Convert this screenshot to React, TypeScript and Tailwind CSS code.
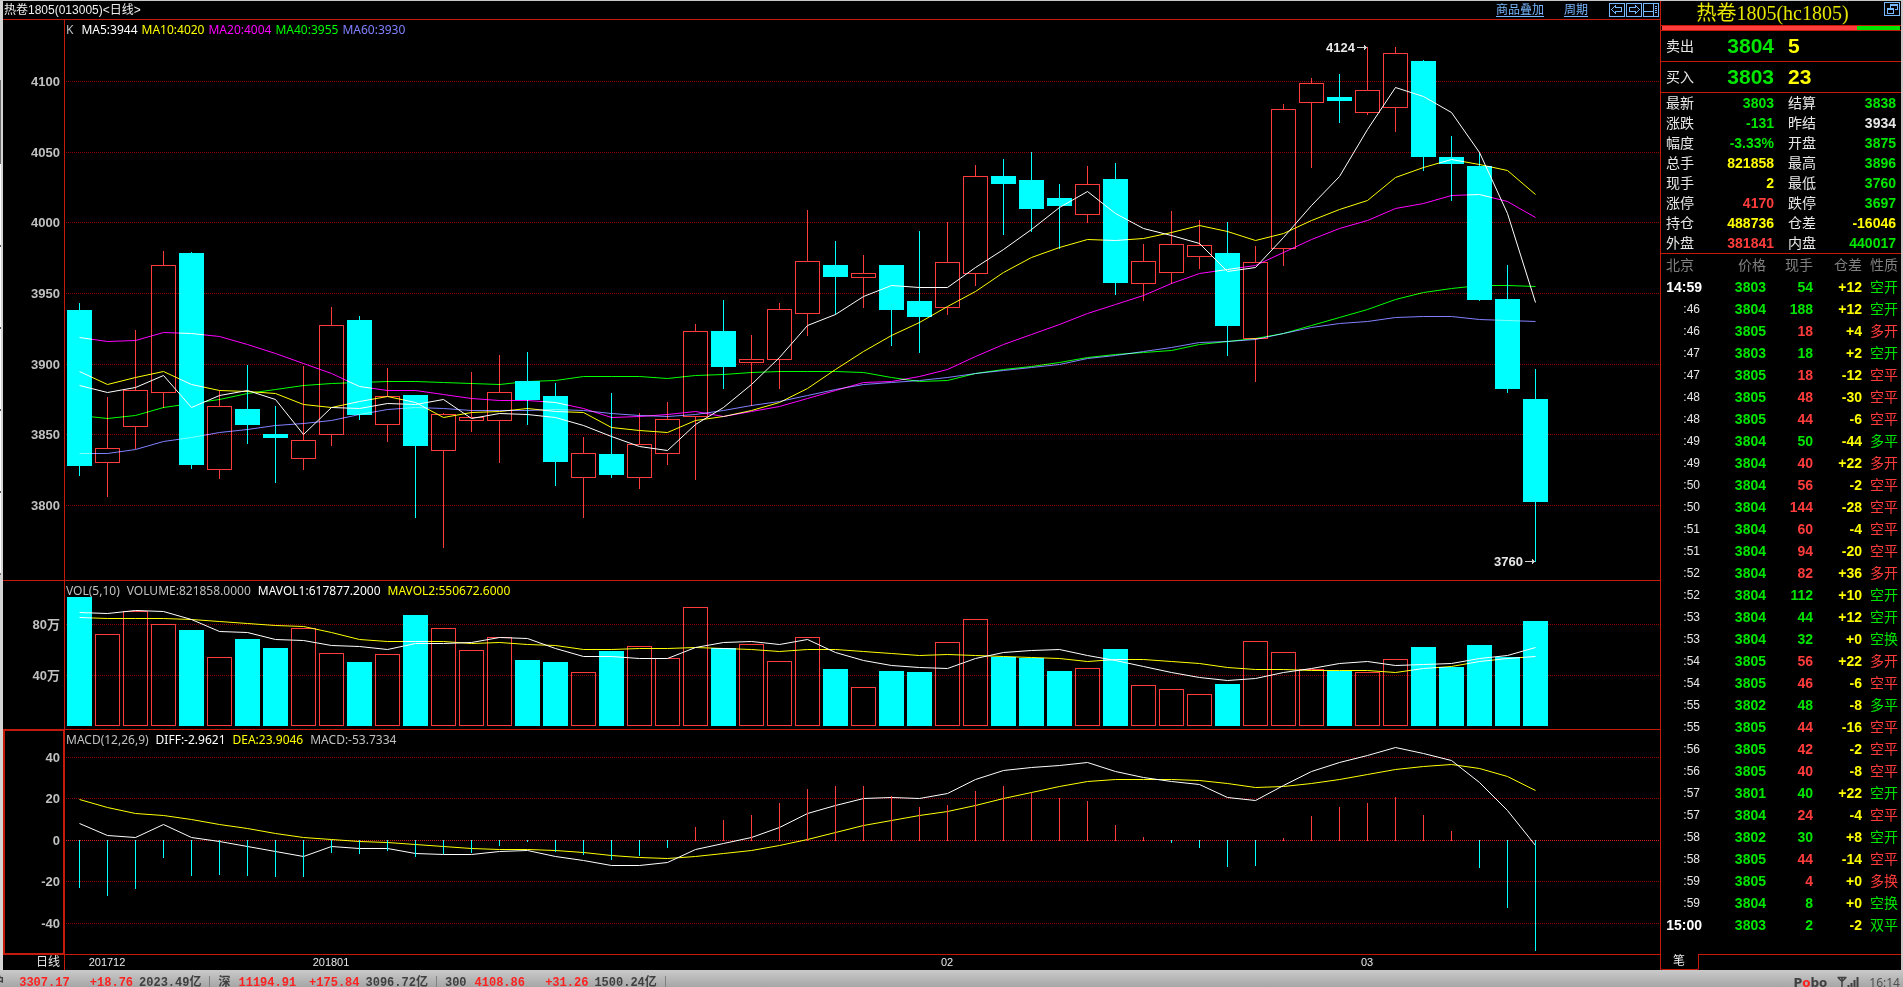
import type { ReactNode } from 'react';
import clsx from 'clsx';

type Candle = [top: number, bottom: number, high: number, low: number, up: 0 | 1];
type Tone = 'up' | 'down' | 'warn' | 'plain';

const STEP = 28;
const BODY = 25;
const centerX = (i: number) => 14 + i * STEP;

// All y values share one scale that starts at the top of the window,
// every pane shifts them by its own `top`.
const candles: Candle[] = [
  [310, 466, 303, 476, 0], [448, 463, 397, 497, 1], [390, 427, 330, 449, 1], [265, 393, 251, 408, 1],
  [253, 465, 252, 469, 0], [406, 470, 390, 479, 1], [409, 425, 365, 444, 0], [434, 438, 406, 483, 0],
  [440, 459, 366, 470, 1], [325, 435, 307, 446, 1], [320, 415, 316, 420, 0], [396, 425, 368, 442, 1],
  [395, 446, 395, 518, 0], [414, 451, 413, 548, 1], [417, 421, 372, 432, 1], [392, 421, 355, 463, 1],
  [381, 400, 352, 425, 0], [396, 462, 383, 486, 0], [453, 478, 437, 518, 1], [454, 475, 393, 478, 0],
  [444, 478, 413, 489, 1], [419, 454, 402, 465, 1], [331, 417, 324, 480, 1], [331, 367, 300, 389, 0],
  [359, 363, 335, 406, 1], [309, 360, 303, 389, 1], [261, 314, 210, 336, 1], [265, 277, 241, 315, 0],
  [273, 278, 255, 308, 1], [265, 310, 265, 346, 0], [301, 317, 231, 353, 0], [262, 308, 222, 315, 1],
  [176, 274, 165, 286, 1], [176, 184, 159, 235, 0], [180, 209, 152, 232, 0], [198, 206, 184, 249, 0],
  [184, 215, 166, 223, 1], [179, 283, 163, 295, 0], [261, 284, 244, 301, 1], [244, 273, 211, 284, 1],
  [245, 257, 220, 269, 1], [253, 326, 222, 356, 0], [262, 339, 246, 382, 1], [109, 249, 104, 266, 1],
  [83, 103, 78, 168, 1], [97, 101, 74, 123, 0], [90, 113, 47, 115, 1], [53, 108, 47, 132, 1],
  [61, 157, 60, 171, 0], [157, 164, 136, 201, 0], [166, 300, 152, 301, 0], [299, 389, 265, 393, 0],
  [399, 502, 369, 562, 0],
];

const ma5 = [385, 392, 387, 375, 407, 395, 390, 399, 434, 407, 408, 403, 404, 399, 418, 413, 414, 417, 425, 436, 446, 450, 424, 407, 384, 357, 325, 314, 296, 285, 287, 287, 267, 249, 229, 207, 191, 213, 228, 235, 243, 271, 267, 237, 205, 176, 129, 87, 96, 112, 152, 213, 302];
const ma10 = [371, 384, 377, 371, 384, 390, 391, 393, 404, 407, 401, 396, 402, 417, 412, 411, 408, 411, 412, 427, 430, 432, 420, 416, 410, 402, 388, 369, 351, 335, 322, 306, 291, 272, 257, 247, 239, 240, 238, 232, 225, 231, 240, 233, 220, 209, 200, 177, 167, 159, 164, 170, 194];
const ma20 = [337, 341, 340, 332, 333, 336, 344, 353, 363, 373, 386, 390, 390, 394, 398, 400, 400, 402, 408, 417, 416, 414, 411, 416, 411, 406, 398, 390, 382, 381, 376, 369, 356, 344, 334, 324, 313, 304, 295, 283, 273, 269, 265, 252, 239, 228, 220, 208, 203, 195, 194, 201, 217];
const ma40 = [415, 418, 415, 407, 403, 399, 393, 389, 385, 383, 382, 381, 381, 382, 383, 384, 381, 380, 376, 376, 376, 378, 375, 374, 372, 371, 371, 371, 372, 377, 381, 380, 373, 369, 366, 362, 357, 354, 352, 350, 344, 341, 338, 333, 325, 317, 309, 299, 292, 288, 285, 285, 286];
const ma60 = [453, 453, 449, 441, 437, 432, 429, 425, 423, 420, 414, 409, 407, 408, 410, 410, 410, 409, 410, 413, 415, 416, 414, 410, 405, 401, 395, 389, 384, 382, 380, 377, 373, 370, 367, 364, 358, 355, 351, 347, 342, 341, 339, 333, 327, 323, 321, 317, 316, 316, 319, 320, 321];

const volumes = [597, 634, 611, 624, 630, 657, 639, 648, 628, 653, 662, 654, 615, 628, 650, 637, 660, 662, 672, 651, 646, 658, 607, 648, 644, 661, 637, 669, 687, 671, 672, 642, 619, 657, 658, 671, 668, 649, 685, 689, 694, 684, 641, 652, 669, 671, 672, 659, 647, 667, 645, 657, 621];
const mavol1 = [612, 613, 610, 611, 619, 631, 632, 639, 640, 645, 646, 649, 643, 643, 642, 637, 638, 648, 656, 656, 658, 658, 647, 642, 641, 644, 639, 652, 660, 665, 667, 668, 658, 652, 650, 649, 655, 660, 666, 672, 677, 680, 678, 672, 668, 663, 661, 665, 664, 663, 658, 655, 647];
const mavol2 = [617, 618, 618, 618, 619, 621, 623, 625, 626, 632, 639, 641, 641, 641, 643, 642, 644, 645, 649, 649, 648, 648, 647, 648, 649, 651, 649, 649, 651, 653, 655, 654, 655, 656, 657, 658, 661, 659, 659, 661, 663, 667, 669, 669, 670, 670, 670, 672, 668, 666, 661, 658, 656];

const macd = [888, 896, 889, 858, 876, 875, 876, 877, 877, 853, 854, 851, 857, 854, 853, 846, 842, 852, 855, 860, 856, 848, 827, 820, 815, 803, 789, 786, 786, 796, 807, 805, 791, 786, 793, 798, 801, 825, 837, 843, 848, 867, 866, 838, 816, 807, 803, 797, 815, 831, 868, 908, 951];
const diff = [823, 835, 837, 824, 837, 841, 846, 851, 856, 846, 848, 848, 853, 854, 854, 851, 850, 856, 860, 865, 865, 862, 849, 843, 837, 827, 813, 805, 798, 797, 798, 793, 779, 770, 767, 765, 762, 771, 777, 781, 784, 797, 800, 785, 771, 762, 755, 747, 753, 760, 782, 810, 845];
const dea = [799, 807, 813, 815, 819, 824, 828, 833, 837, 839, 841, 842, 844, 846, 848, 849, 849, 850, 852, 855, 857, 858, 856, 853, 850, 845, 839, 832, 825, 820, 815, 811, 805, 798, 792, 786, 781, 779, 779, 779, 780, 783, 787, 786, 783, 779, 774, 769, 766, 764, 768, 776, 790];

const toneClass: Record<Tone, string> = {
  up: 'text-[#ff3c3c]',
  down: 'text-[#00e600]',
  warn: 'text-[#ffff00]',
  plain: 'text-[#e8e8e8]',
};

const quotes: [string, string, Tone, string, string, Tone][] = [
  ['最新', '3803', 'down', '结算', '3838', 'down'],
  ['涨跌', '-131', 'down', '昨结', '3934', 'plain'],
  ['幅度', '-3.33%', 'down', '开盘', '3875', 'down'],
  ['总手', '821858', 'warn', '最高', '3896', 'down'],
  ['现手', '2', 'warn', '最低', '3760', 'down'],
  ['涨停', '4170', 'up', '跌停', '3697', 'down'],
  ['持仓', '488736', 'warn', '仓差', '-16046', 'warn'],
  ['外盘', '381841', 'up', '内盘', '440017', 'down'],
];

const ticks: [string, string, string, string, string, Tone][] = [
  ['14:59', '3803', '54', '+12', '空开', 'down'],
  [':46', '3804', '188', '+12', '空开', 'down'],
  [':46', '3805', '18', '+4', '多开', 'up'],
  [':47', '3803', '18', '+2', '空开', 'down'],
  [':47', '3805', '18', '-12', '空平', 'up'],
  [':48', '3805', '48', '-30', '空平', 'up'],
  [':48', '3805', '44', '-6', '空平', 'up'],
  [':49', '3804', '50', '-44', '多平', 'down'],
  [':49', '3804', '40', '+22', '多开', 'up'],
  [':50', '3804', '56', '-2', '空平', 'up'],
  [':50', '3804', '144', '-28', '空平', 'up'],
  [':51', '3804', '60', '-4', '空平', 'up'],
  [':51', '3804', '94', '-20', '空平', 'up'],
  [':52', '3804', '82', '+36', '多开', 'up'],
  [':52', '3804', '112', '+10', '空开', 'down'],
  [':53', '3804', '44', '+12', '空开', 'down'],
  [':53', '3804', '32', '+0', '空换', 'down'],
  [':54', '3805', '56', '+22', '多开', 'up'],
  [':54', '3805', '46', '-6', '空平', 'up'],
  [':55', '3802', '48', '-8', '多平', 'down'],
  [':55', '3805', '44', '-16', '空平', 'up'],
  [':56', '3805', '42', '-2', '空平', 'up'],
  [':56', '3805', '40', '-8', '空平', 'up'],
  [':57', '3801', '40', '+22', '空开', 'down'],
  [':57', '3804', '24', '-4', '空平', 'up'],
  [':58', '3802', '30', '+8', '空开', 'down'],
  [':58', '3805', '44', '-14', '空平', 'up'],
  [':59', '3805', '4', '+0', '多换', 'up'],
  [':59', '3804', '8', '+0', '空换', 'down'],
  ['15:00', '3803', '2', '-2', '双平', 'down'],
];

// Scroll thumb and rows of the window that sticks out on the left.
const edgeSegments = [
  'h-[79px] bg-[#d4d4d4]',
  'h-[84px] bg-[#6a6a6a]',
  'h-[81px] bg-white',
  'h-[2px] bg-[#555]',
  'h-[80px] bg-white',
  'h-[2px] bg-[#555]',
  'h-[80px] bg-white',
  'h-[2px] bg-[#555]',
  'h-[80px] bg-white',
  'h-[2px] bg-[#555]',
  'h-[80px] bg-white',
  'h-[2px] bg-[#777]',
  'grow bg-[#d4d4d4]',
];

const Line = ({ values, color }: { values: number[]; color: string }) => (
  <polyline
    className="mix-blend-screen"
    fill="none"
    stroke={color}
    points={values.map((y, i) => `${centerX(i) + 0.5},${y + 0.5}`).join(' ')}
  />
);

const Bar = ({ i, top, bottom, up }: { i: number; top: number; bottom: number; up: boolean }) => {
  const x = centerX(i) - 12;

  return up ? (
    <rect
      x={x + 0.5}
      y={top + 0.5}
      width={BODY - 1}
      height={bottom - top - 1}
      fill="none"
      stroke="#ff3c3c"
    />
  ) : (
    <rect x={x} y={top} width={BODY} height={bottom - top} fill="#00ffff" />
  );
};

const Stick = ({ i, from, to, up }: { i: number; from: number; to: number; up: boolean }) => (
  <rect
    x={centerX(i)}
    y={Math.min(from, to)}
    width={1}
    height={Math.abs(to - from)}
    fill={up ? '#ff3c3c' : '#00ffff'}
  />
);

type PaneProps = {
  top: number;
  gutterHeight: string;
  plotHeight: string;
  legendGap: string;
  label: string;
  axis: [number, string][];
  legend: [string, string][];
  active?: boolean;
  zeroY?: number;
  children: ReactNode;
};

const Pane = ({
  top,
  gutterHeight,
  plotHeight,
  legendGap,
  label,
  axis,
  legend,
  active,
  zeroY,
  children,
}: PaneProps) => (
  <section className="flex border-b border-[#c41a0a]" aria-label={label}>
    <div
      className={clsx(
        'w-[62px] shrink-0 border-[#c41a0a]',
        active ? 'border-x-2 border-y' : 'border-r',
      )}
    >
      <svg className={clsx('block w-full overflow-visible', gutterHeight)}>
        <g
          transform={`translate(${active ? -2 : 0} ${-top - (active ? 1 : 0)})`}
          className="text-[13px] font-bold"
          fill="#c0c0c0"
          textAnchor="end"
        >
          {axis.map(([y, text]) => (
            <text key={text} x={57} y={y + 5}>
              {text}
            </text>
          ))}
        </g>
      </svg>
    </div>

    <div className="min-w-0 flex-1">
      <p
        className={clsx(
          "flex h-4 overflow-visible pl-px font-['Noto_Sans',sans-serif] text-xs leading-[20px] whitespace-nowrap",
          legendGap,
        )}
      >
        {legend.map(([text, color]) => (
          <span key={text} className={color}>
            {text}
          </span>
        ))}
      </p>
      <svg className={clsx('block w-full', plotHeight)}>
        <g transform={`translate(0 ${-top - 16})`}>
          {axis.map(([y]) => (
            <line
              key={y}
              x1={1}
              x2="100%"
              y1={y + 0.5}
              y2={y + 0.5}
              stroke={y === zeroY ? '#d82020' : '#900000'}
              strokeDasharray="1 1"
              shapeRendering="crispEdges"
            />
          ))}
          {children}
        </g>
      </svg>
    </div>
  </section>
);

const Callout = ({ x, y, text }: { x: number; y: number; text: string }) => (
  <g>
    <text x={x - 12} y={y + 5} textAnchor="end" fill="#e8e8e8" className="text-[13px] font-bold">
      {text}
    </text>
    <path d={`M${x - 10} ${y + 0.5}h10M${x - 2.5} ${y - 2}v5M${x - 1.5} ${y - 1}v3`} stroke="#d0d0d0" />
  </g>
);

const ToolButton = ({ label, children }: { label: string; children: ReactNode }) => (
  <button type="button" aria-label={label} className="block">
    <svg width="16" height="14" fill="none" stroke="#78b8ff" shapeRendering="crispEdges">
      <rect x="0.5" y="0.5" width="15" height="13" />
      {children}
    </svg>
  </button>
);

const ChartHeader = () => (
  <header className="flex h-[19px] items-center border-b border-[#c41a0a] pl-px text-xs">
    <h1 className="flex-1 text-[#f0f0f0]">热卷1805(013005)&lt;日线&gt;</h1>
    <nav className="flex items-center text-[#78b8ff]">
      <a href="#overlay" className="mr-5 underline underline-offset-2">
        商品叠加
      </a>
      <a href="#period" className="mr-[21px] underline underline-offset-2">
        周期
      </a>
      <div className="flex gap-px pr-px">
        <ToolButton label="上一个">
          <path d="M2.5 6.5l4-4v2h6v4h-6v2z" />
        </ToolButton>
        <ToolButton label="下一个">
          <path d="M13.5 6.5l-4-4v2h-6v4h6v2z" />
        </ToolButton>
        <ToolButton label="布局">
          <path d="M10.5 1v12M1 8.5h9M12 3.5h2M12 5.5h2M12 7.5h2M12 9.5h2" />
        </ToolButton>
      </div>
    </nav>
  </header>
);

const TimeAxis = () => (
  <div className="flex h-[15px]">
    <div className="w-[62px] border-r border-[#c41a0a] pr-1 text-right text-xs leading-[15px] text-[#e8e8e8]">
      日线
    </div>
    <svg className="block h-[15px] flex-1">
      <g className="text-[11px]" fill="#e8e8e8" textAnchor="middle">
        {[
          [1, '201712'],
          [9, '201801'],
          [31, '02'],
          [46, '03'],
        ].map(([i, text]) => (
          <text key={text} x={centerX(Number(i))} y={11}>
            {text}
          </text>
        ))}
      </g>
    </svg>
  </div>
);

const Charts = () => (
  <main className="min-w-0 flex-1">
    <ChartHeader />

    <Pane
      top={20}
      gutterHeight="h-[560px]"
      plotHeight="h-[544px]"
      legendGap="gap-1"
      label="K线"
      axis={[
        [81, '4100'],
        [152, '4050'],
        [222, '4000'],
        [293, '3950'],
        [364, '3900'],
        [434, '3850'],
        [505, '3800'],
      ]}
      legend={[
        ['K', 'pr-[4px] text-[#c0c0c0]'],
        ['MA5:3944', 'text-white'],
        ['MA10:4020', 'text-[#ffff00]'],
        ['MA20:4004', 'text-[#ff00ff]'],
        ['MA40:3955', 'text-[#00ff00]'],
        ['MA60:3930', 'text-[#8080ff]'],
      ]}
    >
      {candles.map(([top, bottom, high, low, up], i) => (
        <g key={i}>
          <Stick i={i} from={high} to={top} up={up === 1} />
          <Stick i={i} from={bottom} to={low} up={up === 1} />
          <Bar i={i} top={top} bottom={bottom} up={up === 1} />
        </g>
      ))}
      <Line values={ma5} color="#ffffff" />
      <Line values={ma10} color="#ffff00" />
      <Line values={ma20} color="#ff00ff" />
      <Line values={ma40} color="#00ff00" />
      <Line values={ma60} color="#8080ff" />
      <Callout x={centerX(46)} y={47} text="4124" />
      <Callout x={centerX(52)} y={561} text="3760" />
    </Pane>

    <Pane
      top={581}
      gutterHeight="h-[148px]"
      plotHeight="h-[132px]"
      legendGap="gap-[7px]"
      label="成交量"
      axis={[
        [624, '80万'],
        [675, '40万'],
      ]}
      legend={[
        ['VOL(5,10)', 'text-[#c0c0c0]'],
        ['VOLUME:821858.0000', 'text-[#c0c0c0]'],
        ['MAVOL1:617877.2000', 'text-white'],
        ['MAVOL2:550672.6000', 'text-[#ffff00]'],
      ]}
    >
      {volumes.map((top, i) => (
        <Bar key={i} i={i} top={top} bottom={726} up={candles[i][4] === 1} />
      ))}
      <Line values={mavol1} color="#ffffff" />
      <Line values={mavol2} color="#ffff00" />
    </Pane>

    <Pane
      top={730}
      gutterHeight="h-[222px]"
      plotHeight="h-[208px]"
      legendGap="gap-[7px]"
      label="MACD"
      active
      zeroY={840}
      axis={[
        [757, '40'],
        [798, '20'],
        [840, '0'],
        [881, '-20'],
        [923, '-40'],
      ]}
      legend={[
        ['MACD(12,26,9)', 'text-[#c0c0c0]'],
        ['DIFF:-2.9621', 'text-white'],
        ['DEA:23.9046', 'text-[#ffff00]'],
        ['MACD:-53.7334', 'text-[#c0c0c0]'],
      ]}
    >
      <Line values={diff} color="#ffffff" />
      <Line values={dea} color="#ffff00" />
      {macd.map((y, i) => (
        <Stick key={i} i={i} from={y < 840 ? 841 : 840} to={y} up={y < 840} />
      ))}
    </Pane>

    <TimeAxis />
  </main>
);

const BestPrice = ({ label, price, amount }: { label: string; price: string; amount: string }) => (
  <div className="flex h-[31px] items-center border-b border-[#c41a0a]">
    <span className="w-[50px] pl-[5px] text-sm text-[#e8e8e8]">{label}</span>
    <span className="w-[63px] text-right text-[21px] font-bold text-[#00e600]">{price}</span>
    <span className="pl-[14px] text-[21px] font-bold text-[#ffff00]">{amount}</span>
  </div>
);

const QuoteTable = () => (
  <table className="w-full table-fixed border-b border-[#c41a0a] text-sm leading-5">
    <tbody>
      {quotes.map(([label, value, tone, label2, value2, tone2]) => (
        <tr key={label} className="h-5">
          <th className="w-[50px] pl-[5px] text-left font-normal text-[#e8e8e8]">{label}</th>
          <td className={clsx('w-[63px] text-right font-bold', toneClass[tone])}>{value}</td>
          <th className="w-[60px] pl-[14px] text-left font-normal text-[#e8e8e8]">{label2}</th>
          <td className={clsx('pr-[5px] text-right font-bold', toneClass[tone2])}>{value2}</td>
        </tr>
      ))}
    </tbody>
  </table>
);

const TickTable = () => (
  <table className="w-full table-fixed text-right text-sm leading-[22px]">
    <thead className="text-[#808080]">
      <tr className="h-[22px]">
        <th className="w-[41px] pl-[5px] text-left font-normal">北京</th>
        <th className="w-[64px] font-normal">价格</th>
        <th className="w-[47px] font-normal">现手</th>
        <th className="w-[49px] font-normal">仓差</th>
        <th className="pr-[3px] font-normal">性质</th>
      </tr>
    </thead>
    <tbody>
      {ticks.map(([time, price, amount, change, kind, tone], i) => (
        <tr key={i} className="h-[22px] font-bold">
          <td className={time.startsWith(':') ? 'pr-[2px] text-xs leading-[22px] font-normal text-[#e8e8e8]' : 'text-white'}>
            {time}
          </td>
          <td className="text-[#00e600]">{price}</td>
          <td className={toneClass[tone]}>{amount}</td>
          <td className="text-[#ffff00]">{change}</td>
          <td className={clsx('pr-[3px] font-normal', toneClass[tone])}>{kind}</td>
        </tr>
      ))}
    </tbody>
  </table>
);

const QuotePanel = () => (
  <aside className="flex w-[241px] shrink-0 flex-col border-l border-[#c41a0a]">
    <div className="flex h-[24px] items-start">
      <h2 className="flex-1 text-center font-['Liberation_Serif','Noto_Sans_CJK_SC',serif] text-xl leading-[24px] text-[#e6e600]">
        热卷1805(hc1805)
      </h2>
      <div className="pt-px pr-px">
        <ToolButton label="还原窗口">
          <path d="M6.5 6V2.5h7v5H11M6.5 3.5h7M3.5 6.5h6v5h-6zM3.5 7.5h6" />
        </ToolButton>
      </div>
    </div>
    <div className="flex h-[6px] border-y border-[#c41a0a] px-px">
      <div className="w-[82%] bg-[#ff3c3c]" />
      <div className="flex-1 bg-[#00e600]" />
    </div>
    <BestPrice label="卖出" price="3804" amount="5" />
    <BestPrice label="买入" price="3803" amount="23" />
    <QuoteTable />
    <TickTable />
    <div className="flex-1" />
    <div className="flex h-[16px]">
      <button
        type="button"
        className="w-[38px] rounded-b-[2px] border-r border-b border-[#c41a0a] pr-px text-xs leading-[15px] text-[#e8e8e8]"
      >
        笔
      </button>
      <div className="flex-1 border-t border-[#c41a0a]" />
    </div>
  </aside>
);

type IndexProps = { name: string; value: string; change: string; amount: string };

const IndexQuote = ({ name, value, change, amount }: IndexProps) => (
  <li className="flex items-start border-r border-[#808080] px-2">
    <span>{name}</span>
    <span className="pl-2 text-[#ff2020]">{value}</span>
    <span className="pl-[13px] text-[#ff2020]">{change}</span>
    <span className="pl-1.5">{amount}</span>
  </li>
);

const StatusBar = () => (
  <footer className="flex h-[17px] overflow-hidden bg-linear-to-b from-[#cacaca] to-[#a6a6a6] pt-[5px] text-xs leading-[14px] text-[#404040]">
    <ul className="-ml-4 flex flex-1 pt-px font-['Liberation_Mono','Noto_Sans_CJK_SC',monospace] font-bold whitespace-pre">
      <IndexQuote name="沪 " value="3307.17" change=" +18.76" amount="2023.49亿" />
      <IndexQuote name="深" value="11194.91" change="+175.84" amount="3096.72亿" />
      <IndexQuote name="300" value="4108.86" change=" +31.26" amount="1500.24亿" />
    </ul>
    <div className="flex items-start pt-px pr-[3px]">
      <span className="pr-[10px] font-['DejaVu_Sans',sans-serif] font-bold">
        P<span className="text-[#ff2020]">o</span>bo
      </span>
      <svg width="22" height="12" stroke="#404040" fill="none" aria-label="信号">
        <path d="M0.5 1.5h9M1 1.5l4 4 4-4M5 1.5V12" strokeWidth="1.5" />
        <path d="M11.5 9v3M14.5 7v5M17.5 4v8M20.5 1v11" strokeWidth="2" />
      </svg>
      <span className="pl-[10px] font-['Noto_Sans',sans-serif] text-[#505050]">16:14</span>
    </div>
  </footer>
);

export default function App() {
  return (
    <div className="flex min-h-screen flex-col overflow-hidden bg-black font-['Liberation_Sans','Noto_Sans_CJK_SC',sans-serif]">
      <div className="flex border-t border-[#c8c8c8]">
        <div className="flex w-[3px] shrink-0 bg-[#d4d4d4]">
          <div className="flex w-px flex-col">
            {edgeSegments.map((segment, i) => (
              <div key={i} className={segment} />
            ))}
          </div>
        </div>
        <Charts />
        <QuotePanel />
        <div className="w-[2px] shrink-0 bg-[#d0c8c8]" />
      </div>
      <StatusBar />
    </div>
  );
}
